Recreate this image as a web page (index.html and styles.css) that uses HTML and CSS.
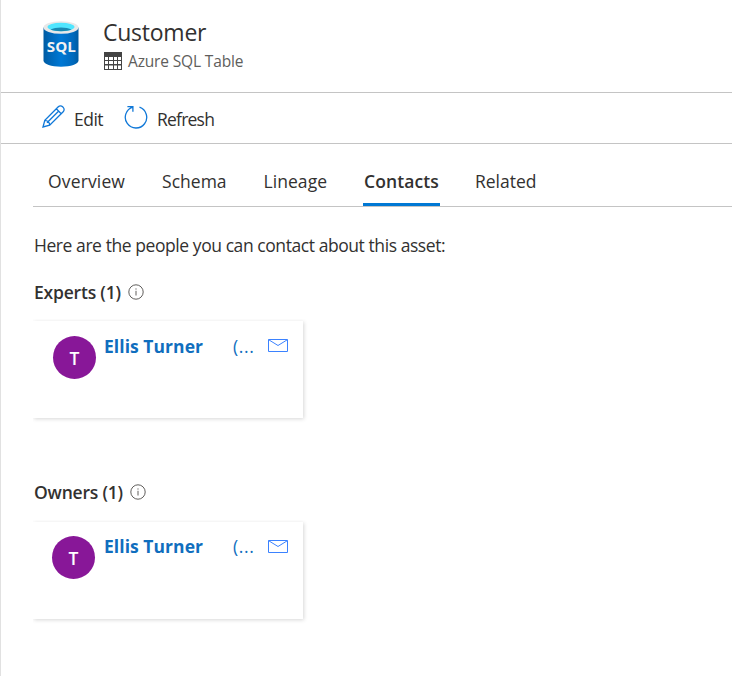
FILE: index.html
```html
<!DOCTYPE html>
<html lang="en">
<head>
<meta charset="utf-8">
<title>Customer</title>
<link rel="stylesheet" href="styles.css">
</head>
<body>
<div class="page">
  <header class="asset-header">
    <svg class="asset-logo" width="36" height="46" viewBox="0 0 36 46">
      <defs>
        <linearGradient id="body" x1="0" x2="1" y1="0" y2="0">
          <stop offset="0" stop-color="#005ba1"/><stop offset=".15" stop-color="#0065b4"/><stop offset=".5" stop-color="#0078d4"/><stop offset=".85" stop-color="#0069bc"/><stop offset="1" stop-color="#005ba1"/>
        </linearGradient>
      </defs>
      <path d="M.5 6.5V39.500C.5 43 8.300 45.700 18 45.700s17.500-2.700 17.500-6.200V6.500z" fill="url(#body)"/>
      <ellipse cx="18" cy="6.500" rx="17.500" ry="6.300" fill="#e8e8e8"/>
      <ellipse cx="18" cy="6" rx="13.500" ry="4.200" fill="#50e6ff"/>
      <path d="M7.500 8.600C10 7.200 13.800 6.500 18 6.500s8 .7 10.500 2.100c-2.500 1-6.200 1.600-10.500 1.600s-8-.6-10.500-1.600z" fill="#198ab3"/>
      <text class="logo-text" x="18.300" y="30.800" text-anchor="middle" textLength="29" lengthAdjust="spacingAndGlyphs">SQL</text>
    </svg>
    <div class="asset-titles">
      <h1 class="asset-name">Customer</h1>
      <div class="asset-type">
        <svg width="18" height="18" viewBox="0 0 18 18">
          <path d="M0 0h18v18H0z" fill="#444"/>
          <path d="M1 5h3v3H1zM5 5h4v3H5zM10 5h3v3h-3zM14 5h3v3h-3zM1 9h3v3H1zM5 9h4v3H5zM10 9h3v3h-3zM14 9h3v3h-3zM1 13.500h3V17H1zM5 13.500h4V17H5zM10 13.500h3V17h-3zM14 13.500h3V17h-3z" fill="#fff"/>
        </svg>
        <span class="asset-type-label">Azure SQL Table</span>
      </div>
    </div>
  </header>
  <div class="toolbar">
    <button class="command edit">
      <svg width="23" height="23" viewBox="0 0 23 23"><path d="M1 22l1.800-6.700L16.300 1.800a3 3 0 0 1 4.300 0l.6.6a3 3 0 0 1 0 4.300L7.700 20.200zM2.800 15.300c2.700 0 4.900 2.200 4.900 4.900M14.300 3.800l4.900 4.900M5 17.800L16.500 6.300"/></svg>
      <span>Edit</span>
    </button>
    <button class="command refresh">
      <svg width="24" height="24" viewBox="0 0 24 24"><path d="M15.500 2.200A10.700 10.700 0 1 1 8.800 2.100M3.400 1.600h5.500v5.200"/></svg>
      <span>Refresh</span>
    </button>
  </div>
  <nav class="tabs">
    <a class="tab overview">Overview</a>
    <a class="tab schema">Schema</a>
    <a class="tab lineage">Lineage</a>
    <a class="tab contacts active">Contacts</a>
    <a class="tab related">Related</a>
  </nav>
  <main class="content">
    <p class="intro">Here are the people you can contact about this asset:</p>
    <section class="group experts">
      <h2 class="group-title"><span>Experts (1)</span>
        <svg class="info" width="16" height="16" viewBox="0 0 16 16"><circle cx="8" cy="8" r="7.200"/><path d="M8 6.800v4.700M8 4.400v1.200"/></svg>
      </h2>
      <div class="card">
        <div class="avatar">T</div>
        <a class="person">Ellis Turner</a>
        <span class="alias">(...</span>
        <svg class="mail" width="20" height="13" viewBox="0 0 20 13"><path d="M.5.5h19v12H.5zM.8.800L10 6.500 19.200.8"/></svg>
      </div>
    </section>
    <section class="group owners">
      <h2 class="group-title"><span>Owners (1)</span>
        <svg class="info" width="16" height="16" viewBox="0 0 16 16"><circle cx="8" cy="8" r="7.200"/><path d="M8 6.800v4.700M8 4.400v1.200"/></svg>
      </h2>
      <div class="card">
        <div class="avatar">T</div>
        <a class="person">Ellis Turner</a>
        <span class="alias">(...</span>
        <svg class="mail" width="20" height="13" viewBox="0 0 20 13"><path d="M.5.5h19v12H.5zM.8.800L10 6.500 19.200.8"/></svg>
      </div>
    </section>
  </main>
</div>
</body>
</html>
```
FILE: styles.css
```css
* { box-sizing: border-box; }
body {
  margin: 0;
  background: #fff;
  color: #323130;
  font-family: "Open Sans", "Noto Sans", sans-serif;
  font-size: 17.5px;
  line-height: 24px;
}
svg { display: block; flex: none; }
.page { min-height: 676px; border-left: 1px solid #e1e1e1; overflow: hidden; }

.asset-header {
  display: flex;
  height: 93px;
  padding: 21px 0 0 42px;
  border-bottom: 1px solid #c4c4c4;
}
.logo-text { font-size: 15px; font-weight: 700; fill: #f2f2f2; }
.asset-titles { margin-left: 25px; }
.asset-name {
  margin: -5px 0 0 -1px;
  font-size: 23px;
  font-weight: 400;
  line-height: 32px;
  letter-spacing: -0.25px;
}
.asset-type { display: flex; align-items: center; margin-top: 1px; }
.asset-type-label { margin-left: 6px; font-size: 15.5px; color: #605e5c; letter-spacing: -0.15px; }

.toolbar {
  display: flex;
  height: 51px;
  padding: 12px 0 0 41px;
  border-bottom: 1px solid #c4c4c4;
}
.command {
  display: flex;
  padding: 0;
  border: 0;
  background: none;
  color: inherit;
  font: inherit;
}
.command svg { fill: none; stroke: #1078d8; stroke-width: 1.3; }
.command span { margin: 2px 0 0 9px; letter-spacing: -0.5px; }
.refresh { margin-left: 21px; }
.command.refresh span { letter-spacing: -0.8px; }

.tabs {
  display: flex;
  gap: 35px;
  height: 63px;
  margin-left: 32px;
  padding-left: 14px;
  border-bottom: 1px solid #c4c4c4;
}
.tab { height: 62px; padding: 25px 1px 0; }
.tab.overview { letter-spacing: 0.15px; }
.tab.lineage { letter-spacing: 0.05px; }
.tab.active { border-bottom: 3px solid #0078d4; font-weight: 600; letter-spacing: 0.1px; }
.tab.related { margin-left: -1px; }

.content { padding-left: 32px; }
.intro { margin: 26px 0 0 1px; letter-spacing: -0.43px; }
.group { height: 200px; }
.experts { margin-top: 23px; }
.group-title {
  display: flex;
  margin: 0 0 0 1px;
  font-size: 17.5px;
  font-weight: 600;
  line-height: 24px;
  letter-spacing: -0.2px;
}
.info { margin: 4px 0 0 7px; fill: none; stroke: #605e5c; }
.card {
  display: flex;
  width: 270px;
  height: 97px;
  margin-top: 17px;
  padding: 15px 15px 0 20px;
  box-shadow: 1px 1px 4px rgba(0, 0, 0, 0.16);
  clip-path: inset(-2px -6px -6px 0);
}
.owners .card { margin-top: 18px; padding-top: 14px; }
.owners .mail { margin-top: 4px; }
.avatar {
  flex: none;
  width: 43px;
  height: 43px;
  border-radius: 50%;
  background: #881798;
  color: #fff;
  font-weight: 600;
  line-height: 45px;
  text-align: center;
}
.owners .avatar { margin: 0 1px 0 -1px; }
.person { flex: none; margin-left: 8px; width: 129px; margin-top: -2px; color: #106ebe; font-weight: 700; letter-spacing: 0.05px; }
.alias { flex: none; width: 35px; margin-top: -2px; color: #106ebe; letter-spacing: 0.6px; }
.mail { margin-top: 3px; fill: none; stroke: #3b82ff; }
```
